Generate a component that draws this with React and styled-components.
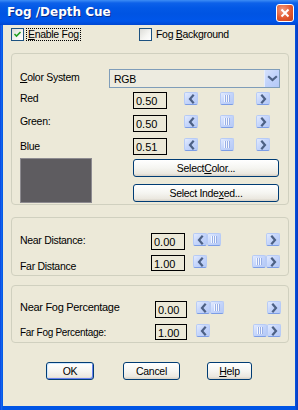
import React from "react";
import styled, { createGlobalStyle } from "styled-components";

const Global = createGlobalStyle`
  html, body { margin: 0; padding: 0; background: #0054e3; }
  #root { width: 298px; height: 410px; }
  * { box-sizing: border-box; }
`;

const Window = styled.div`
  width: 298px;
  height: 410px;
  display: flex;
  flex-direction: column;
  background: linear-gradient(90deg, #0831d9 0px, #166aee 1px, #0055e5 3px, #0055e5 295px, #0a3fc4 297px);
  font-family: "Liberation Sans", Arial, sans-serif;
  font-size: 10.5px;
  letter-spacing: -0.3px;
  color: #000;
`;

const TitleBar = styled.div`
  height: 25px;
  flex: none;
  display: flex;
  align-items: center;
  justify-content: space-between;
  padding: 0 4px 1px 7px;
  background: linear-gradient(180deg, #3d8df5 0px, #0d61e9 3px, #0258e6 8px, #0054e3 14px, #0056ea 21px, #0047d2 25px);
`;

const Title = styled.div`
  color: #fff;
  font-family: "DejaVu Sans", "Liberation Sans", sans-serif;
  font-weight: bold;
  font-size: 12px;
  letter-spacing: 0;
  text-shadow: 1px 1px 0 #0a2c8a;
`;

const CloseBtn = styled.div`
  width: 18px;
  height: 18px;
  border: 1px solid #fff;
  border-radius: 3px;
  background: radial-gradient(circle at 35% 30%, #f09a80 0%, #e2582f 55%, #c4401b 100%);
  display: flex;
  align-items: center;
  justify-content: center;
  margin-top: 1px;
`;

const Body = styled.div`
  flex: 1;
  margin: 0 3px 4px 3px;
  background: #ece9d8;
  padding: 3px 6px 0 8px;
  display: flex;
  flex-direction: column;
`;

const CheckRow = styled.div`
  display: flex;
  align-items: center;
  height: 13px;
`;

const CheckItem = styled.label`
  display: flex;
  align-items: center;
  width: ${(p) => p.$w || "auto"};
`;

const Box = styled.span`
  width: 13px;
  height: 13px;
  flex: none;
  border: 1px solid #1c5180;
  background: linear-gradient(135deg, #dcdcd7 0%, #f6f6f3 60%, #ffffff 100%);
  display: flex;
  align-items: center;
  justify-content: center;
`;

const CheckLabel = styled.span`
  margin-left: 3px;
  padding: 0 1px;
  line-height: 11px;
  outline: ${(p) => (p.$focus ? "1px dotted #000" : "none")};
  outline-offset: 0px;
`;

const U = styled.span`
  text-decoration: underline;
`;

const Group = styled.div`
  margin-top: ${(p) => p.$mt}px;
  height: ${(p) => p.$h}px;
  border: 1px solid #d0d0bf;
  border-radius: 4px;
  padding: ${(p) => p.$pt}px 8px 0 8px;
  display: flex;
  flex-direction: column;
  gap: ${(p) => p.$gap}px;
`;

const Row = styled.div`
  display: flex;
  align-items: flex-start;
  height: ${(p) => p.$h || 17}px;
  margin-top: ${(p) => p.$mt || 0}px;
`;

const Label = styled.div`
  width: ${(p) => p.$w}px;
  flex: none;
  font-size: ${(p) => p.$fs || 10.5}px;
  padding-top: ${(p) => (p.$pt == null ? 1 : p.$pt)}px;
  white-space: nowrap;
`;

const Combo = styled.div`
  width: 172px;
  height: 19px;
  border: 1px solid #7f9db9;
  display: flex;
  align-items: center;
  justify-content: space-between;
  padding-left: 4px;
  background: #edebe0;
`;

const ComboBtn = styled.div`
  width: 15px;
  height: 17px;
  background: linear-gradient(135deg, #d6e1fb 0%, #c1d3fb 50%, #b4c8f6 100%);
  border-left: 1px solid #e6edfd;
  display: flex;
  align-items: center;
  justify-content: center;
`;

const TextBox = styled.div`
  width: ${(p) => p.$w}px;
  height: ${(p) => p.$h || 17}px;
  flex: none;
  border: 1px solid #000;
  padding: 2px 0 0 2px;
  font-size: 11px;
  letter-spacing: 0;
  background: #ece9d8;
`;

const Track = styled.div`
  width: ${(p) => p.$w}px;
  height: 13px;
  margin-left: ${(p) => p.$ml}px;
  display: flex;
  flex: none;
`;

const SBtn = styled.div`
  width: 14px;
  height: 13px;
  flex: none;
  border-radius: 2px;
  border: 1px solid #b7cbf6;
  border-bottom-color: #7c9de6;
  background: linear-gradient(135deg, #e3ebfd 0%, #c6d6fb 45%, #b5c9f6 100%);
  display: flex;
  align-items: center;
  justify-content: center;
  margin-left: ${(p) => (p.$right ? "auto" : "0")};
`;

const Grip = styled.div`
  width: 6px;
  height: 7px;
  background: repeating-linear-gradient(90deg, #f4f7fe 0px, #f4f7fe 1px, #98afe6 1px, #98afe6 2px);
`;

const SwatchRow = styled.div`
  display: flex;
  margin-top: 3px;
  justify-content: space-between;
  padding-right: 1px;
`;

const Swatch = styled.div`
  width: 72px;
  height: 45px;
  background: #5e5c60;
  border: 1px solid #8d8b90;
`;

const BtnCol = styled.div`
  display: flex;
  flex-direction: column;
  gap: 7px;
  margin-top: 1px;
`;

const PushBtn = styled.div`
  width: ${(p) => p.$w}px;
  height: 18px;
  margin-left: ${(p) => p.$ml || 0}px;
  border: 1px solid #003c74;
  border-radius: 3px;
  background: linear-gradient(180deg, #ffffff 0%, #f5f5f1 50%, #ebe8e0 85%, #d6d0c5 100%);
  box-shadow: ${(p) =>
    p.$default ? "inset 1px 1px 0 #cee7ff, inset -1px -1px 0 #6982ee" : "none"};
  display: flex;
  align-items: center;
  justify-content: center;
  font-size: 10.5px;
`;

const ButtonRow = styled.div`
  display: flex;
  margin-top: 19px;
  padding-left: 35px;
`;

const Arrow = ({ dir }) => {
  const d =
    dir === "left"
      ? "M8 2.5 L5 6 L8 9.5"
      : dir === "right"
      ? "M5 2.5 L8 6 L5 9.5"
      : "M3 5 L6.5 8 L10 5";
  const s = dir === "down" ? 13 : 12;
  return (
    <svg width={s} height={s} viewBox={`0 0 ${s} ${s}`}>
      <path d={d} fill="none" stroke="#4d6185" strokeWidth="2.2" strokeLinecap="square" />
    </svg>
  );
};

const Scroll = ({ w, ml, value }) => {
  const offset = Math.round((w - 42) * value);
  return (
    <Track $w={w} $ml={ml}>
      <SBtn>
        <Arrow dir="left" />
      </SBtn>
      <SBtn style={{ marginLeft: offset }}>
        <Grip />
      </SBtn>
      <SBtn $right>
        <Arrow dir="right" />
      </SBtn>
    </Track>
  );
};

const ValueRow = ({ label, value, labelW, boxW, boxH, track, gap, val, fs, mt, pt }) => (
  <Row $mt={mt}>
    <Label $w={labelW} $fs={fs} $pt={pt}>
      {label}
    </Label>
    <TextBox $w={boxW} $h={boxH}>
      {value}
    </TextBox>
    <Scroll w={track} ml={gap} value={val} />
  </Row>
);

export default function App() {
  return (
    <>
      <Global />
      <Window>
        <TitleBar>
          <Title>Fog /Depth Cue</Title>
          <CloseBtn>
            <svg width="10" height="10" viewBox="0 0 10 10">
              <path d="M1.5 1.5 L8.5 8.5 M8.5 1.5 L1.5 8.5" stroke="#fff" strokeWidth="2" />
            </svg>
          </CloseBtn>
        </TitleBar>
        <Body>
          <CheckRow>
            <CheckItem $w="128px">
              <Box>
                <svg width="9" height="9" viewBox="0 0 9 9">
                  <path d="M1.5 4 L3.5 6 L7.5 2" fill="none" stroke="#21a121" strokeWidth="1.6" />
                </svg>
              </Box>
              <CheckLabel $focus>
                <U>E</U>nable Fog
              </CheckLabel>
            </CheckItem>
            <CheckItem>
              <Box />
              <CheckLabel>
                Fog <U>B</U>ackground
              </CheckLabel>
            </CheckItem>
          </CheckRow>

          <Group $mt={12} $h={152} $pt={15} $gap={0}>
            <Row $h={19}>
              <Label $w={89} $pt={2}>
                <U>C</U>olor System
              </Label>
              <Combo>
                <span>RGB</span>
                <ComboBtn>
                  <Arrow dir="down" />
                </ComboBtn>
              </Combo>
            </Row>
            <ValueRow mt={4} label="Red" value="0.50" labelW={113} boxW={34} track={86} gap={17} val={0.5} pt={0} />
            <ValueRow mt={6} label="Green:" value="0.50" labelW={113} boxW={34} track={86} gap={17} val={0.5} pt={0} />
            <ValueRow mt={6} label="Blue" value="0.51" labelW={113} boxW={34} track={86} gap={17} val={0.5} pt={2} />
            <SwatchRow>
              <Swatch />
              <BtnCol>
                <PushBtn $w={146}>
                  Select <U>C</U>olor...
                </PushBtn>
                <PushBtn $w={146}>
                  Select Inde<U>x</U>ed...
                </PushBtn>
              </BtnCol>
            </SwatchRow>
          </Group>

          <Group $mt={12} $h={59} $pt={15} $gap={5}>
            <ValueRow label="Near Distance:" value="0.00" labelW={131} boxW={34} track={87} gap={8} val={0} pt={1} />
            <ValueRow label="Far Distance" value="1.00" labelW={131} boxW={34} boxH={16} track={87} gap={8} val={1} pt={5} />
          </Group>

          <Group $mt={9} $h={58} $pt={15} $gap={6}>
            <ValueRow label="Near Fog Percentage" value="0.00" labelW={135} boxW={32} track={85} gap={9} val={0} fs={11} pt={0} />
            <ValueRow label="Far Fog Percentage:" value="1.00" labelW={135} boxW={32} boxH={16} track={85} gap={9} val={1} fs={10} pt={3} />
          </Group>

          <ButtonRow>
            <PushBtn $w={48} $default>
              OK
            </PushBtn>
            <PushBtn $w={57} $ml={29}>
              Cancel
            </PushBtn>
            <PushBtn $w={45} $ml={27}>
              <span>
                <U>H</U>elp
              </span>
            </PushBtn>
          </ButtonRow>
        </Body>
      </Window>
    </>
  );
}
